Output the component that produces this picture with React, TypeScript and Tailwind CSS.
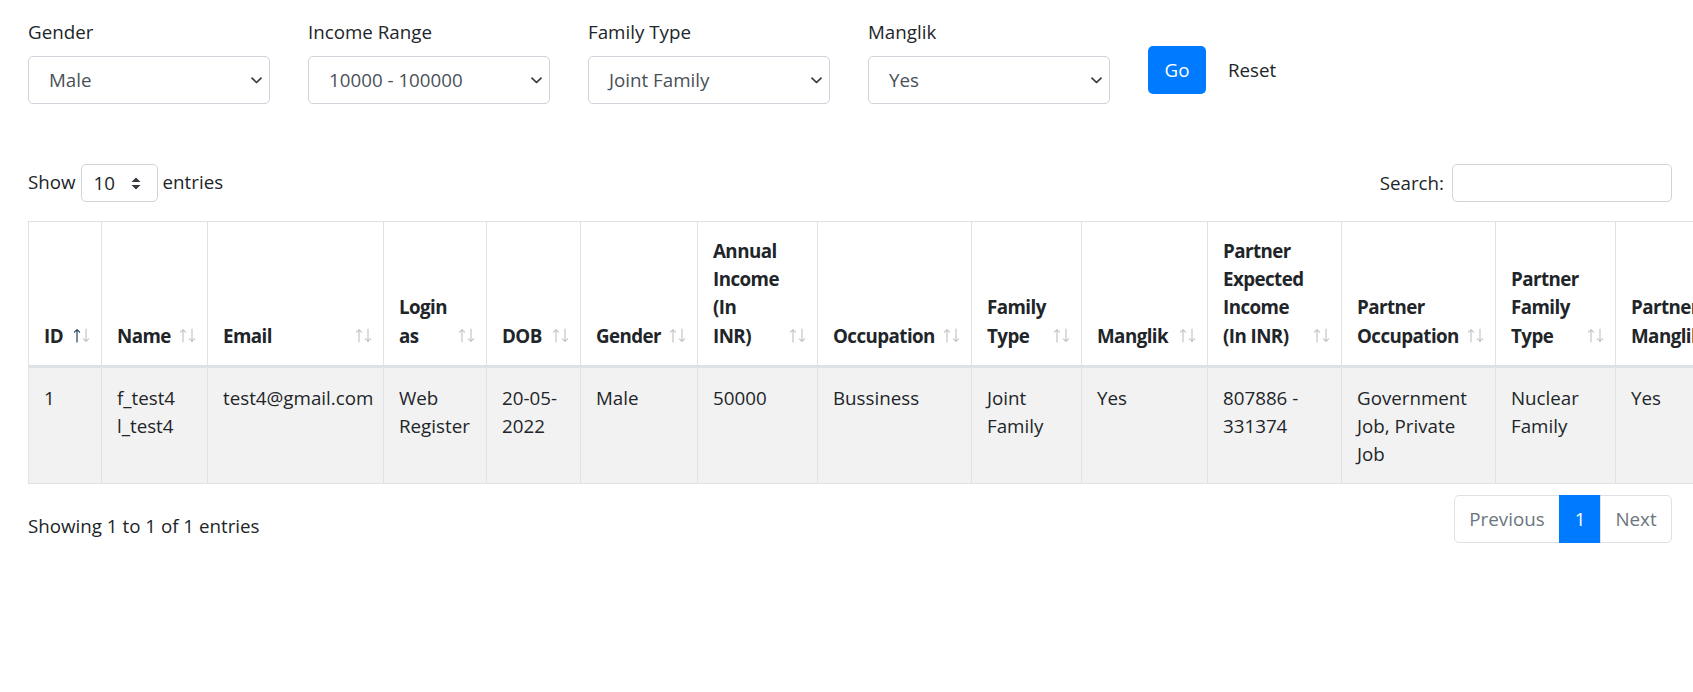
import React from "react";

const Chevron = () => (
  <svg width="11" height="7" viewBox="0 0 11 7" fill="none" className="shrink-0">
    <path d="M1 1.2l4.5 4.3L10 1.2" stroke="#343a40" strokeWidth="1.7" strokeLinecap="round" strokeLinejoin="round" />
  </svg>
);

const UpDown = () => (
  <svg width="10" height="13" viewBox="0 0 10 13" className="shrink-0">
    <path d="M0.5 5L5 0.5L9.5 5Z" fill="#343a40" />
    <path d="M0.5 8L5 12.5L9.5 8Z" fill="#343a40" />
  </svg>
);

const SortArrows = ({ active }: { active?: boolean }) => (
  <svg width="18" height="15" viewBox="0 0 18 15" fill="none" className="shrink-0 mb-[7px] ml-[4px]">
    <path
      d="M4 14V1.6M1.4 4.2L4 1.6l2.6 2.6"
      stroke={active ? "#22415f" : "#c3c5c8"}
      strokeWidth="1.2"
      strokeLinecap="round"
      strokeLinejoin="round"
    />
    <path
      d="M13 1v12.4M10.4 10.8L13 13.4l2.6-2.6"
      stroke="#c3c5c8"
      strokeWidth="1.2"
      strokeLinecap="round"
      strokeLinejoin="round"
    />
  </svg>
);

const Filter = ({ label, value }: { label: string; value: string }) => (
  <div className="w-[242px] shrink-0">
    <div className="mb-[10px]">{label}</div>
    <div className="h-[48px] w-[242px] rounded-[5px] border border-[#ced4da] bg-white pl-[20px] pr-[7px] flex items-center justify-between text-[#495057]">
      <span>{value}</span>
      <Chevron />
    </div>
  </div>
);

const Th = ({ lines, active }: { lines: string[]; active?: boolean }) => (
  <th className="border border-[#dee2e6] border-b-[3px] pl-[15px] pr-[10px] pt-[15px] pb-[15px] align-bottom text-left font-bold">
    <div className="flex items-end justify-between">
      <div className="whitespace-nowrap tracking-[-0.03em]">
        {lines.map((l, i) => (
          <div key={i}>{l}</div>
        ))}
      </div>
      <SortArrows active={active} />
    </div>
  </th>
);

const Td = ({ lines }: { lines: string[] }) => (
  <td className="border border-[#dee2e6] px-[15px] pt-[16px] pb-[15px] align-top whitespace-nowrap font-normal">
    {lines.map((l, i) => (
      <div key={i}>{l}</div>
    ))}
  </td>
);

export default function App() {
  const headers: { lines: string[]; active?: boolean }[] = [
    { lines: ["ID"], active: true },
    { lines: ["Name"] },
    { lines: ["Email"] },
    { lines: ["Login", "as"] },
    { lines: ["DOB"] },
    { lines: ["Gender"] },
    { lines: ["Annual", "Income", "(In", "INR)"] },
    { lines: ["Occupation"] },
    { lines: ["Family", "Type"] },
    { lines: ["Manglik"] },
    { lines: ["Partner", "Expected", "Income", "(In INR)"] },
    { lines: ["Partner", "Occupation"] },
    { lines: ["Partner", "Family", "Type"] },
    { lines: ["Partner", "Manglik"] },
  ];
  const cells: string[][] = [
    ["1"],
    ["f_test4", "l_test4"],
    ["test4@gmail.com"],
    ["Web", "Register"],
    ["20-05-", "2022"],
    ["Male"],
    ["50000"],
    ["Bussiness"],
    ["Joint", "Family"],
    ["Yes"],
    ["807886 -", "331374"],
    ["Government", "Job, Private", "Job"],
    ["Nuclear", "Family"],
    ["Yes"],
  ];

  return (
    <div className="w-full min-h-[692px] overflow-hidden bg-white text-[#212529] text-[18.75px] leading-[28.125px] font-['Open_Sans',sans-serif]">
      <div className="px-[28px] pt-[18px] w-[1693px]">
        <div className="flex items-start gap-[38px]">
          <Filter label="Gender" value="Male" />
          <Filter label="Income Range" value="10000 - 100000" />
          <Filter label="Family Type" value="Joint Family" />
          <Filter label="Manglik" value="Yes" />
          <div className="flex items-center mt-[28px]">
            <button className="h-[48px] w-[58px] rounded-[5px] bg-[#007bff] text-white">Go</button>
            <span className="ml-[22px]">Reset</span>
          </div>
        </div>

        <div className="mt-[60px] h-[38px] w-[1644px] flex items-center justify-between">
          <div className="flex items-center">
            <span className="-mt-[3px]">Show</span>
            <div className="ml-[5px] h-[38px] w-[77px] rounded-[5px] border border-[#ced4da] flex items-center justify-between pl-[12px] pr-[16px]">
              <span>10</span>
              <UpDown />
            </div>
            <span className="ml-[5px] -mt-[3px]">entries</span>
          </div>
          <div className="flex items-center">
            <span>Search:</span>
            <div className="ml-[8px] h-[38px] w-[220px] rounded-[5px] border border-[#ced4da]" />
          </div>
        </div>

        <table className="mt-[19px] table-fixed border-collapse w-[1717px]">
          <colgroup>
            <col className="w-[73px]" />
            <col className="w-[106px]" />
            <col className="w-[176px]" />
            <col className="w-[103px]" />
            <col className="w-[94px]" />
            <col className="w-[117px]" />
            <col className="w-[120px]" />
            <col className="w-[154px]" />
            <col className="w-[110px]" />
            <col className="w-[126px]" />
            <col className="w-[134px]" />
            <col className="w-[154px]" />
            <col className="w-[120px]" />
            <col className="w-[130px]" />
          </colgroup>
          <thead>
            <tr className="bg-white">
              {headers.map((h, i) => (
                <Th key={i} lines={h.lines} active={h.active} />
              ))}
            </tr>
          </thead>
          <tbody>
            <tr className="bg-[#f2f2f2]">
              {cells.map((c, i) => (
                <Td key={i} lines={c} />
              ))}
            </tr>
          </tbody>
        </table>

        <div className="mt-[11px] w-[1644px] flex items-start justify-between">
          <div className="mt-[17px]">Showing 1 to 1 of 1 entries</div>
          <div className="flex">
            <div className="h-[48px] w-[106px] border border-[#dee2e6] rounded-l-[5px] flex items-center justify-center text-[#6c757d]">
              Previous
            </div>
            <div className="h-[48px] w-[42px] -ml-px bg-[#007bff] border border-[#007bff] flex items-center justify-center text-white">
              1
            </div>
            <div className="h-[48px] w-[72px] -ml-px border border-[#dee2e6] rounded-r-[5px] flex items-center justify-center text-[#6c757d]">
              Next
            </div>
          </div>
        </div>
      </div>
    </div>
  );
}
